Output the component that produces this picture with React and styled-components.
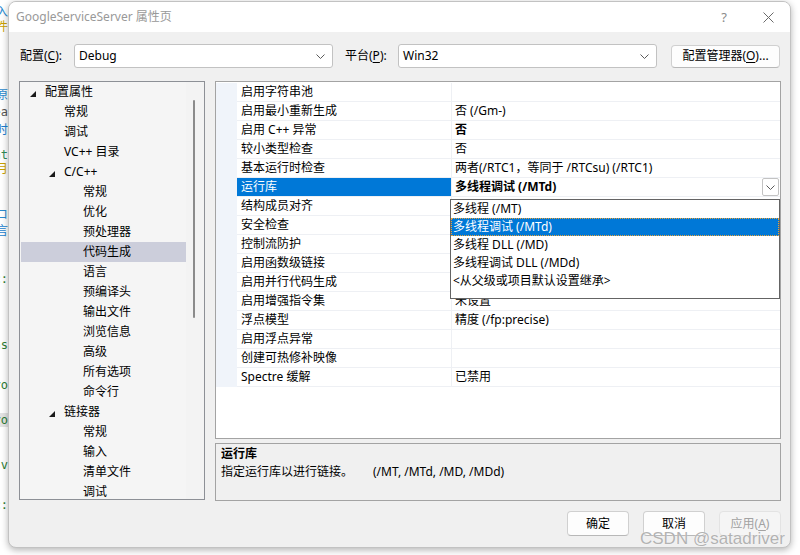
import React from 'react';
import styled, { createGlobalStyle } from 'styled-components';

const FONT = `"Noto Sans", "Noto Sans CJK SC", sans-serif`;

const GlobalStyle = createGlobalStyle`
  * { box-sizing: border-box; }
  html, body { margin: 0; padding: 0; width: 800px; height: 555px; overflow: hidden; background: #f4f4f4; }
  body { font-family: ${FONT}; font-size: 12px; color: #000; }
  #root { width: 800px; height: 555px; position: relative; }
`;

const Desktop = styled.div`
  position: relative;
  width: 800px;
  height: 555px;
  background: #fff;
`;

const EditorStrip = styled.div`
  position: absolute;
  left: 0;
  top: 0;
  width: 8px;
  height: 555px;
  overflow: hidden;
`;

const CodeLine = styled.div`
  position: absolute;
  right: 0;
  height: 14px;
  line-height: 14px;
  white-space: nowrap;
  font-family: ${(p) => (p.$mono ? `"DejaVu Sans Mono", monospace` : FONT)};
  font-size: 12px;
  color: ${(p) => p.$color};
  background: ${(p) => (p.$band ? '#e4e4e4' : 'transparent')};
  padding-left: ${(p) => (p.$band ? '20px' : '0')};
`;

const Window = styled.div`
  position: absolute;
  left: 8px;
  top: 1px;
  width: 783px;
  height: 547px;
  border: 1px solid #c2c2c2;
  border-radius: 8px;
  overflow: hidden;
  background: #f0f0f0;
  box-shadow: 0 2px 7px rgba(0, 0, 0, 0.3);
  display: flex;
  flex-direction: column;
`;

const TitleBar = styled.div`
  height: 30px;
  flex: none;
  background: #fff;
  display: flex;
  align-items: center;
  padding-left: 7px;
`;

const TitleText = styled.div`
  color: #999;
  font-size: 12px;
  line-height: 16px;
  flex: 1;
`;

const CaptionButton = styled.div`
  width: 44px;
  height: 30px;
  display: flex;
  align-items: center;
  justify-content: center;
  color: #8a8a8a;
  font-size: 13px;
`;

const Body = styled.div`
  flex: 1;
  display: flex;
  flex-direction: column;
  padding: 12px 8px 0 10px;
`;

const TopRow = styled.div`
  height: 24px;
  display: flex;
  align-items: center;
`;

const FieldLabel = styled.div`
  width: ${(p) => p.$w}px;
  margin-left: ${(p) => p.$ml || 0}px;
  padding-left: 1px;
  line-height: 16px;
  flex: none;
`;

const U = styled.span`
  text-decoration: underline;
  text-underline-offset: 2px;
`;

const Combo = styled.div`
  width: 259px;
  height: 24px;
  flex: none;
  background: #fff;
  border: 1px solid #c2c2c2;
  border-radius: 3px;
  display: flex;
  align-items: center;
  padding: 0 7px 0 4px;
  line-height: 16px;
`;

const ComboText = styled.div`
  flex: 1;
`;

const Chevron = () => (
  <svg width="9" height="5" viewBox="0 0 9 5">
    <polyline points="0.5,0.5 4.5,4.5 8.5,0.5" fill="none" stroke="#5a5a5a" strokeWidth="1" />
  </svg>
);

const Button = styled.div`
  width: ${(p) => p.$w}px;
  height: ${(p) => p.$h}px;
  margin-left: ${(p) => p.$ml || 0}px;
  flex: none;
  background: ${(p) => (p.$disabled ? '#f5f5f5' : '#fdfdfd')};
  border: 1px solid ${(p) => (p.$disabled ? '#e3e3e3' : '#d0d0d0')};
  border-bottom-color: ${(p) => (p.$disabled ? '#e3e3e3' : '#b8b8b8')};
  border-radius: 4px;
  color: ${(p) => (p.$disabled ? '#a2a2a2' : '#000')};
  display: flex;
  align-items: center;
  justify-content: center;
  line-height: 16px;
`;

const MainRow = styled.div`
  margin-top: 13px;
  height: 420px;
  display: flex;
  gap: 10px;
`;

const TreePanel = styled.div`
  width: 186px;
  height: 419px;
  border: 1px solid #8d9096;
  background: #f5f5f5;
  display: flex;
`;

const TreeList = styled.div`
  width: 166px;
  overflow: hidden;
`;

const TreeItem = styled.div`
  position: relative;
  height: 20px;
  line-height: 20px;
  margin-left: 1px;
  padding-left: ${(p) => 24 + p.$level * 19}px;
  background: ${(p) => (p.$selected ? '#cccedb' : 'transparent')};
  white-space: nowrap;
`;

const Expander = styled.svg`
  position: absolute;
  left: ${(p) => 9 + p.$level * 19}px;
  top: 9px;
`;

const ScrollTrack = styled.div`
  flex: 1;
  position: relative;
  background: #f3f3f3;
`;

const ScrollThumb = styled.div`
  position: absolute;
  left: 7px;
  top: 18px;
  width: 2px;
  height: 218px;
  border-radius: 1px;
  background: #8b8b8b;
`;

const RightCol = styled.div`
  width: 566px;
  display: flex;
  flex-direction: column;
  gap: 4px;
`;

const GridPanel = styled.div`
  position: relative;
  height: 358px;
  border: 1px solid #a3a3a3;
  background: #fff;
  padding-top: 1px;
`;

const GridRow = styled.div`
  display: grid;
  grid-template-columns: 21px 215px 1fr;
  height: 19px;
`;

const Gutter = styled.div`
  background: #f0f4fa;
`;

const NameCell = styled.div`
  border-bottom: 1px solid #eef0f4;
  border-right: 1px solid #eef0f4;
  padding-left: 4px;
  line-height: 18px;
  white-space: nowrap;
  overflow: hidden;
  background: ${(p) => (p.$selected ? '#0078d7' : 'transparent')};
  color: ${(p) => (p.$selected ? '#fff' : '#000')};
`;

const ValueCell = styled.div`
  position: relative;
  border-bottom: 1px solid #eef0f4;
  padding-left: 3px;
  line-height: 18px;
  white-space: nowrap;
  overflow: hidden;
  font-weight: ${(p) => (p.$bold ? 700 : 400)};
`;

const DropButton = styled.div`
  position: absolute;
  right: 1px;
  top: 0;
  width: 17px;
  height: 18px;
  background: #fff;
  border: 1px solid #c3c3c3;
  border-radius: 2px;
  display: flex;
  align-items: center;
  justify-content: center;
`;

const DropList = styled.div`
  position: absolute;
  left: 234px;
  top: 117px;
  width: 330px;
  height: 100px;
  background: #fff;
  border: 1px solid #646464;
`;

const DropItem = styled.div`
  height: 18px;
  line-height: 18px;
  padding-left: 2px;
  white-space: nowrap;
  background: ${(p) => (p.$selected ? '#0078d7' : 'transparent')};
  color: ${(p) => (p.$selected ? '#fff' : '#000')};
  outline: ${(p) => (p.$selected ? '1px dotted #e8a33a' : 'none')};
  outline-offset: -1px;
`;

const DescPanel = styled.div`
  height: 58px;
  border: 1px solid #a3a3a3;
  background: #f0f0f0;
  padding: 1px 5px;
`;

const DescTitle = styled.div`
  font-weight: 700;
  line-height: 18px;
`;

const DescText = styled.div`
  line-height: 18px;
  white-space: nowrap;
`;

const DescFlags = styled.span`
  margin-left: 20px;
`;

const Footer = styled.div`
  margin-top: 10px;
  display: flex;
  justify-content: flex-end;
  gap: 14px;
  padding-right: 1px;
`;

const Watermark = styled.div`
  position: absolute;
  left: 640px;
  top: 530px;
  font-family: "Liberation Sans", Arial, sans-serif;
  font-size: 17px;
  line-height: 18px;
  color: rgba(165, 165, 165, 0.85);
  text-shadow: 0 0 1px rgba(255, 255, 255, 0.8);
  white-space: nowrap;
`;

const codeLines = [
  { y: 5, t: '入', c: '#1f8ad2' },
  { y: 20, t: '件', c: '#c9a100' },
  { y: 88, t: '原', c: '#2b8bcf' },
  { y: 105, t: 'ea', c: '#555', mono: true },
  { y: 123, t: '时', c: '#1a7fd0' },
  { y: 148, t: 'at', c: '#2e8b57', mono: true },
  { y: 162, t: '月', c: '#c9a100' },
  { y: 208, t: 'コ', c: '#2b8bcf' },
  { y: 224, t: '言', c: '#1a7fd0' },
  { y: 272, t: 'c:', c: '#2e7d32', mono: true },
  { y: 338, t: 'ns', c: '#2e7d32', mono: true },
  { y: 378, t: 'ro', c: '#2e7d32', mono: true },
  { y: 413, t: 'ro', c: '#2e7d32', mono: true, band: true },
  { y: 458, t: 'sv', c: '#2e7d32', mono: true },
  { y: 498, t: 'c:', c: '#2e7d32', mono: true },
];

const tree = [
  { t: '配置属性', l: 0, exp: true },
  { t: '常规', l: 1 },
  { t: '调试', l: 1 },
  { t: 'VC++ 目录', l: 1 },
  { t: 'C/C++', l: 1, exp: true },
  { t: '常规', l: 2 },
  { t: '优化', l: 2 },
  { t: '预处理器', l: 2 },
  { t: '代码生成', l: 2, sel: true },
  { t: '语言', l: 2 },
  { t: '预编译头', l: 2 },
  { t: '输出文件', l: 2 },
  { t: '浏览信息', l: 2 },
  { t: '高级', l: 2 },
  { t: '所有选项', l: 2 },
  { t: '命令行', l: 2 },
  { t: '链接器', l: 1, exp: true },
  { t: '常规', l: 2 },
  { t: '输入', l: 2 },
  { t: '清单文件', l: 2 },
  { t: '调试', l: 2 },
];

const rows = [
  { n: '启用字符串池', v: '' },
  { n: '启用最小重新生成', v: '否 (/Gm-)' },
  { n: '启用 C++ 异常', v: '否', b: true },
  { n: '较小类型检查', v: '否' },
  { n: '基本运行时检查', v: '两者(/RTC1，等同于 /RTCsu) (/RTC1)' },
  { n: '运行库', v: '多线程调试 (/MTd)', b: true, sel: true },
  { n: '结构成员对齐', v: '' },
  { n: '安全检查', v: '' },
  { n: '控制流防护', v: '' },
  { n: '启用函数级链接', v: '' },
  { n: '启用并行代码生成', v: '' },
  { n: '启用增强指令集', v: '未设置' },
  { n: '浮点模型', v: '精度 (/fp:precise)' },
  { n: '启用浮点异常', v: '' },
  { n: '创建可热修补映像', v: '' },
  { n: 'Spectre 缓解', v: '已禁用' },
];

const options = [
  '多线程 (/MT)',
  '多线程调试 (/MTd)',
  '多线程 DLL (/MD)',
  '多线程调试 DLL (/MDd)',
  '<从父级或项目默认设置继承>',
];

export default function App() {
  return (
    <>
      <GlobalStyle />
      <Desktop>
        <EditorStrip>
          {codeLines.map((l, i) => (
            <CodeLine key={i} style={{ top: l.y }} $color={l.c} $mono={l.mono} $band={l.band}>
              {l.t}
            </CodeLine>
          ))}
        </EditorStrip>
        <Window>
          <TitleBar>
            <TitleText>GoogleServiceServer 属性页</TitleText>
            <CaptionButton>?</CaptionButton>
            <CaptionButton>
              <svg width="11" height="11" viewBox="0 0 11 11">
                <path d="M0.5 0.5 L10.5 10.5 M10.5 0.5 L0.5 10.5" stroke="#6a6a6a" strokeWidth="1" fill="none" />
              </svg>
            </CaptionButton>
          </TitleBar>
          <Body>
            <TopRow>
              <FieldLabel $w={55}>配置(<U>C</U>):</FieldLabel>
              <Combo>
                <ComboText>Debug</ComboText>
                <Chevron />
              </Combo>
              <FieldLabel $w={54} $ml={11}>平台(<U>P</U>):</FieldLabel>
              <Combo>
                <ComboText>Win32</ComboText>
                <Chevron />
              </Combo>
              <Button $w={109} $h={23} $ml={14}>配置管理器(<U>O</U>)...</Button>
            </TopRow>
            <MainRow>
              <TreePanel>
                <TreeList>
                  {tree.map((it, i) => (
                    <TreeItem key={i} $level={it.l} $selected={it.sel}>
                      {it.exp && (
                        <Expander $level={it.l} width="6" height="6" viewBox="0 0 6 6">
                          <polygon points="6,0 6,6 0,6" fill="#1a1a1a" />
                        </Expander>
                      )}
                      {it.t}
                    </TreeItem>
                  ))}
                </TreeList>
                <ScrollTrack>
                  <ScrollThumb />
                </ScrollTrack>
              </TreePanel>
              <RightCol>
                <GridPanel>
                  {rows.map((r, i) => (
                    <GridRow key={i}>
                      <Gutter />
                      <NameCell $selected={r.sel}>{r.n}</NameCell>
                      <ValueCell $bold={r.b}>
                        {r.v}
                        {r.sel && (
                          <DropButton>
                            <Chevron />
                          </DropButton>
                        )}
                      </ValueCell>
                    </GridRow>
                  ))}
                  <DropList>
                    {options.map((o, i) => (
                      <DropItem key={i} $selected={i === 1}>{o}</DropItem>
                    ))}
                  </DropList>
                </GridPanel>
                <DescPanel>
                  <DescTitle>运行库</DescTitle>
                  <DescText>
                    指定运行库以进行链接。<DescFlags>(/MT, /MTd, /MD, /MDd)</DescFlags>
                  </DescText>
                </DescPanel>
              </RightCol>
            </MainRow>
            <Footer>
              <Button $w={62} $h={25}>确定</Button>
              <Button $w={62} $h={25}>取消</Button>
              <Button $w={62} $h={25} $disabled>应用(<U>A</U>)</Button>
            </Footer>
          </Body>
        </Window>
        <Watermark>CSDN @satadriver</Watermark>
      </Desktop>
    </>
  );
}
